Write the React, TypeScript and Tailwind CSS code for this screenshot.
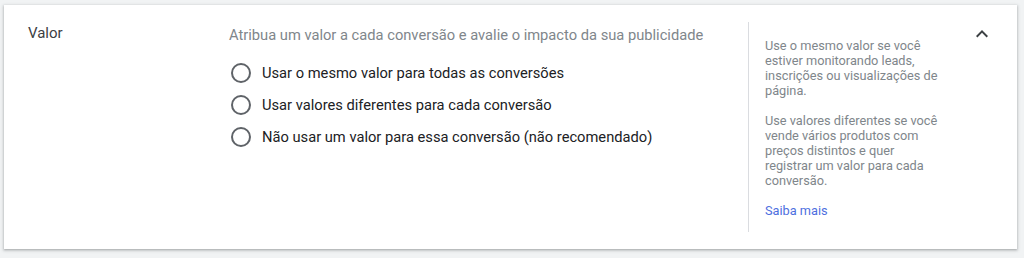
const options = [
  "Usar o mesmo valor para todas as conversões",
  "Usar valores diferentes para cada conversão",
  "Não usar um valor para essa conversão (não recomendado)",
];

export default function App() {
  return (
    <div className="h-[258px] w-[1024px] bg-[#f1f3f4] pl-[4px] pt-[5px] font-['Roboto',sans-serif]">
      <div className="flex h-[244px] w-[1013px] bg-white shadow-[0_1px_2px_rgba(60,64,67,0.3),0_1px_3px_1px_rgba(60,64,67,0.15)]">
        {/* título */}
        <div className="w-[225px] shrink-0 pl-[24px] pt-[17px] text-[15px] text-[#3c4043]">Valor</div>

        {/* conteúdo */}
        <div className="w-[519px] shrink-0 pt-[20px]">
          <div className="text-[14.7px] leading-5 text-[#80868b]">
            Atribua um valor a cada conversão e avalie o impacto da sua publicidade
          </div>
          <div className="mt-[18px] flex flex-col gap-[12px]">
            {options.map((opt) => (
              <label key={opt} className="flex items-center gap-[11px]">
                <span className="ml-[2px] h-[20px] w-[20px] rounded-full border-2 border-[#5f6368]" />
                <span className="text-[14.7px] leading-5 text-[#202124]">{opt}</span>
              </label>
            ))}
          </div>
        </div>

        {/* painel lateral */}
        <div className="my-[17px] w-[210px] shrink-0 border-l border-[#dadce0] pl-[16px] pt-[16px] text-[12.75px] leading-[15px] text-[#80868b]">
          <p className="w-[178px]">Use o mesmo valor se você estiver monitorando leads, inscrições ou visualizações de página.</p>
          <p className="mt-[15px] w-[178px]">
            Use valores diferentes se você vende vários produtos com preços distintos e quer registrar um valor para cada conversão.
          </p>
          <a className="mt-[15px] block text-[#4e6fe0]">Saiba mais</a>
        </div>

        <div className="flex-1 pl-[12px] pt-[17px]">
          <svg width="24" height="24" viewBox="0 0 24 24">
            <path d="M7.41 15.41 12 10.83l4.59 4.58L18 14l-6-6-6 6z" fill="#3c4043" />
          </svg>
        </div>
      </div>
    </div>
  );
}
